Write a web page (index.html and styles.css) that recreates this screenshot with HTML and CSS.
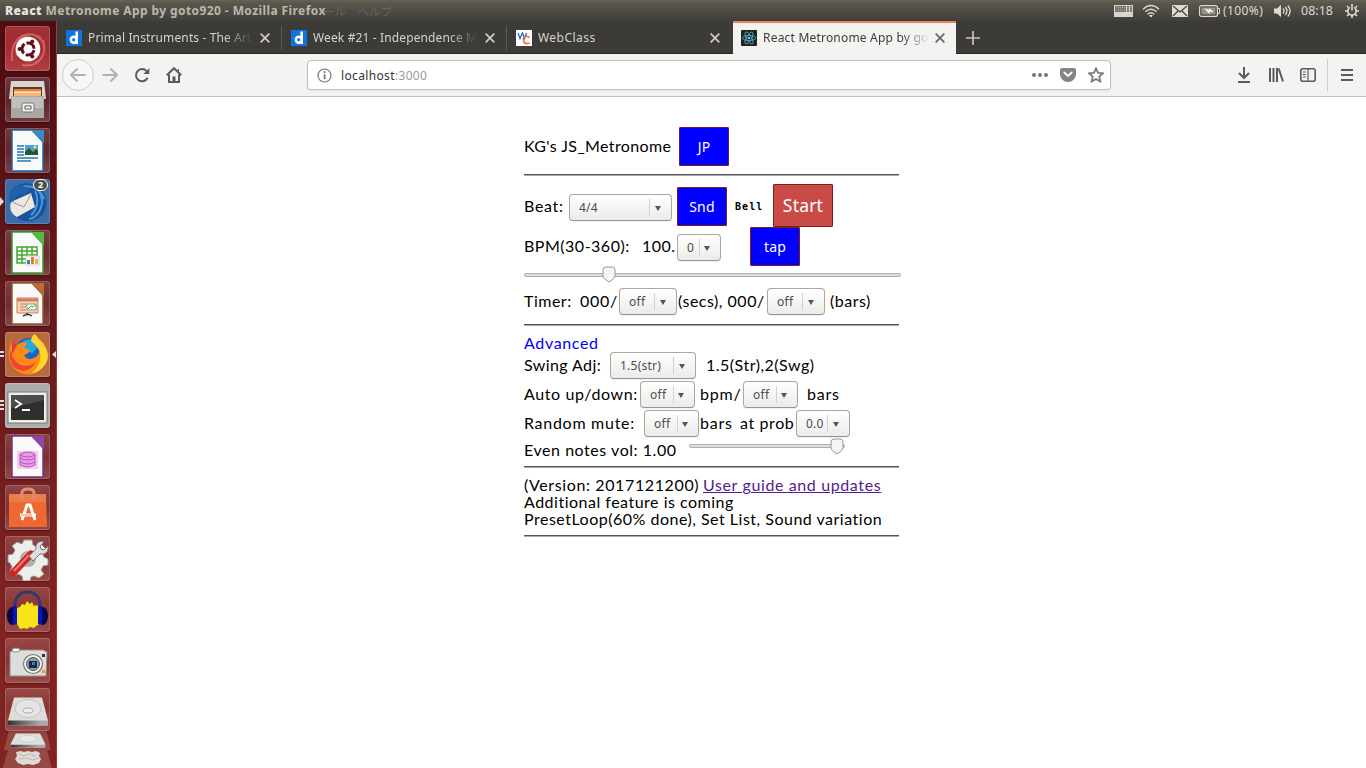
FILE: index.html
```html
<!DOCTYPE html>
<html lang="en">
<head>
<meta charset="utf-8">
<title>React Metronome App by goto920</title>
<link rel="stylesheet" href="styles.css">
</head>
<body>
<header class="panel">
  <div class="title"><strong>React</strong> Metronome App by goto920 - Mozilla Firefox</div>
  <div class="ghost">ール　ヘルプ</div>
  <div class="status">
    <svg class="kbd" width="19" height="12" viewBox="0 0 19 12"><path d="M0 0h19v12H0z" fill="#d8d5ce"/><path d="M1 1h11v6H1zM13 1h2v6h-2zM16 1h2v6h-2z" fill="#77766f"/><path d="M2 2.5h9M2 5h9M14 2v4M17 2v4" stroke="#aaa9a3" stroke-dasharray="1 1"/></svg>
    <svg class="wifi" width="18" height="14" viewBox="0 0 18 14" fill="none" stroke="#dfdbd2" stroke-width="1.4"><path d="M1 5.2Q9-2.2 17 5.2M3.3 7.8Q9 2.5 14.7 7.8M5.6 10.3Q9 7 12.4 10.3"/><path d="M7 11.5Q9 9.8 11 11.5L9 13.5z" fill="#dfdbd2" stroke="none"/></svg>
    <svg class="mail" width="16" height="12" viewBox="0 0 16 12"><path d="M0 0h16v12H0z" fill="#dfdbd2"/><path d="M1 1l7 6 7-6M1 11l5-5M15 11l-5-5" fill="none" stroke="#46443e" stroke-width="1.2"/></svg>
    <svg class="batt" width="21" height="12" viewBox="0 0 21 12"><rect x=".6" y=".6" width="17.8" height="10.8" rx="2" fill="none" stroke="#dfdbd2" stroke-width="1.2"/><path d="M2.5 2.5h14v7h-14z" fill="#96938b"/><path d="M18.500 3.500h2v5h-2" fill="none" stroke="#dfdbd2"/><path d="M5 3l5 2V3l5 4.500-4.500-1V9z" fill="#fff"/></svg>
    <span class="pct">(100%)</span>
    <svg class="vol" width="18" height="14" viewBox="0 0 18 14"><path d="M0 4.5h3L7 1v12L3 9.5H0z" fill="#dfdbd2"/><path d="M9 4.5q2 2.5 0 5M11.3 3q3.3 4 0 8M13.8 1.5q4.6 5.5 0 11" fill="none" stroke="#dfdbd2" stroke-width="1.3"/></svg>
    <span class="clock">08:18</span>
    <svg class="gear" width="14" height="14" viewBox="0 0 14 14" fill="none" stroke="#dfdbd2"><path d="M4.800 3.400a4.200 4.200 0 1 0 4.400 0" stroke-width="1.700"/><path d="M7 0v6.500" stroke-width="1.600"/><path d="M3.500 3.500L2 2M10.500 3.500L12 2M2.500 7H0M11.500 7H14M3.700 10.300L2 12M10.300 10.300L12 12M7 11.500V14" stroke-width="1.700"/></svg>
  </div>
</header>
<div class="desktop">
<nav class="launcher">
  <div class="tile red"><svg viewBox="0 0 45 45"><path d="M7 35C5 18 15 5 29 9 43 14 42 31 30 37M17 39C34 42 43 28 38 14M12 30C8 14 22 3 36 12" fill="none" stroke="#e58e8e" stroke-width="2" opacity=".55"/><circle cx="23" cy="23" r="12.3" fill="#fff"/><circle cx="23" cy="23" r="6" fill="none" stroke="#601016" stroke-width="3" stroke-dasharray="10.5 2" stroke-dashoffset="-1"/><g fill="#601016"><circle cx="14.5" cy="23" r="2"/><circle cx="27.2" cy="15.6" r="2"/><circle cx="27.2" cy="30.4" r="2"/></g></svg></div>
  <div class="tile"><svg viewBox="0 0 45 45"><path d="M6 4h33l2 18H4z" fill="#d7d5d2"/><path d="M8 10h29v10H8z" fill="#5d3920"/><path d="M9 12h27v3H9z" fill="#ec8434"/><path d="M9 15h27v4H9z" fill="#f6b477"/><path d="M9 15h27" stroke="#fff"/><path d="M6 19h33v22H6z" fill="#aaa7a4"/><path d="M7 20h31v11H7z" fill="#c1bfbc"/><rect x="17" y="26" width="12" height="9" rx="1.5" fill="#eee" stroke="#777"/><path d="M20 29h6v3h-6z" fill="#fff" stroke="#555"/></svg></div>
  <div class="tile"><svg viewBox="0 0 45 45"><path d="M7 2h20l11 12v29H7z" fill="#fafafa" stroke="#1e699c" stroke-width="1.5"/><path d="M26 2h13v13z" fill="#368bc4"/><path d="M12 18h7M12 21h7M12 24h7M12 27h7M12 30h21M12 33h14" stroke="#2677ad" stroke-width="1.5"/><path d="M20 17h13v10H20z" fill="#4aa3df"/><path d="M20 27v-3l4-4 4 4 3-3 2 2v4z" fill="#27562d"/><circle cx="30" cy="19" r="1.5" fill="#ffe45c"/></svg></div>
  <div class="tile bluetile"><i class="pip one"></i><svg viewBox="0 0 45 45"><path d="M5 16C8 2 27 1 36 10c11 11 5 31-11 32C10 43 3 29 5 16z" fill="#18539c"/><path d="M9 15C18 1 36 8 39 20M34 12c8 14-2 27-10 28M30 12c5 10 1 20-4 24" fill="none" stroke="#4998da" stroke-width="2"/><path d="M6 23l20-9 4 14-18 10C6 35 4 29 6 23z" fill="#ece8df"/><path d="M7 23l12 5 7-13" fill="none" stroke="#9b9890"/><path d="M4 20C4 9 10 7 15 6l10 4-5 5C13 15 10 18 8 23z" fill="#1d63ac"/></svg><b class="badge">2</b></div>
  <div class="tile"><svg viewBox="0 0 45 45"><path d="M7 2h20l11 12v29H7z" fill="#fafafa" stroke="#31a02e" stroke-width="1.5"/><path d="M26 2h13v13z" fill="#52bd39"/><path d="M12 17h20v16H12zM12 21h20M12 25h20M12 29h20M17 17v16M22 17v16M27 17v16" fill="none" stroke="#45a72e" stroke-width="1.5"/><path d="M21 26h13v9H21z" fill="#fff" stroke="#ccc"/><path d="M22 30h3v4h-3z" fill="#3387bd"/><path d="M26 27h3v7h-3z" fill="#e77837"/><path d="M30 29h3v5h-3z" fill="#d8bc5a"/></svg></div>
  <div class="tile"><svg viewBox="0 0 45 45"><path d="M7 2h20l11 12v29H7z" fill="#fafafa" stroke="#91582a" stroke-width="1.5"/><path d="M26 2h13v13z" fill="#bd6c31"/><path d="M12 17h21v15H12z" fill="#f8d3be" stroke="#d17d57"/><path d="M12 19h21" stroke="#d17d57" stroke-width="3"/><path d="M15 23h6M15 26h6M15 29h6" stroke="#d17d57"/><path d="M22 23h9v6h-9z" fill="#fff" stroke="#6ba769"/><path d="M23 28l3-3 2 1 3-3" fill="none" stroke="#4a9d48"/><path d="M22 32v2M18 35q5-3 9 0" fill="none" stroke="#333" stroke-width="1.5"/></svg></div>
  <div class="tile orange"><i class="pip two"></i><svg viewBox="0 0 45 45"><circle cx="24" cy="21" r="15" fill="#1667c7"/><path d="M18 9q10-5 17 4l-8 8-10-5z" fill="#22a8df"/><path d="M7 8l5 5q4-4 10-2l-3 5q5 1 6 3-2 3-6 4 3 6 10 3 8-4 4-13-3-4-7-4 1-6 4-7 3 5 8 9 9 13 1 23C30 47 12 44 6 32 1 22 6 13 7 8z" fill="#ff8b16"/><path d="M30 2q3 5 8 9 9 13 1 23-5 6-12 7 10-9 8-21-2-5-9-11 1-6 4-7z" fill="#ffd52e"/><path d="M6 18c1 13 13 21 25 12C23 44 9 39 6 30 4 25 4 21 6 18z" fill="#f24236"/><path d="M7 8l5 5-5 10z" fill="#e5394a"/></svg><i class="active"></i></div>
  <div class="tile gray"><i class="pip three"></i><svg viewBox="0 0 45 45"><path d="M3 9h39v31H3z" fill="#ededeb" stroke="#777"/><path d="M6 12h33v25H6z" fill="#2d302d"/><path d="M6 12h33v5L6 25z" fill="#4a4d4a"/><path d="M10 17l6 4-6 4M17 27h8" fill="none" stroke="#fff" stroke-width="1.8"/></svg></div>
  <div class="tile"><svg viewBox="0 0 45 45"><path d="M7 2h20l11 12v29H7z" fill="#fafafa" stroke="#71358b" stroke-width="1.5"/><path d="M26 2h13v13z" fill="#8d48a7"/><path d="M12 17h21v18H12z" fill="#f0ccf1"/><path d="M15 20q8-4 15 0v11q-7 4-15 0z" fill="#e79be7" stroke="#b853bd"/><path d="M15 21q8 4 15 0M15 24q8 4 15 0M15 28q8 4 15 0" fill="none" stroke="#b853bd"/></svg></div>
  <div class="tile"><svg viewBox="0 0 45 45"><path d="M4 9h37l1 33H4z" fill="#ec6934"/><path d="M4 9h37v8H4z" fill="#ee7b4c"/><path d="M17 14V8q0-4 6-4t6 4v6" fill="none" stroke="#e9896b" stroke-width="3"/><path d="M17 35l5-15h3l5 15M15 30h16" fill="none" stroke="#fff" stroke-width="3"/><path d="M16 30h11" stroke="#ef8355"/></svg></div>
  <div class="tile"><svg viewBox="0 0 45 45"><path d="M19 4h8l1 5 4 2 4-3 5 5-3 5 1 3 4 2v6l-5 1-2 4 3 4-5 4-5-2-3 1-1 4h-7l-1-5-4-2-4 2-4-5 2-4-2-4-2-1v-7l5-1 2-4-3-4 5-4 5 2z" fill="#eeeeec" stroke="#999"/><circle cx="23" cy="23" r="8" fill="#b0aeac"/><path d="M8 37l18-19" stroke="#cf2525" stroke-width="7" stroke-linecap="round"/><path d="M9 35l15-16" stroke="#f17c72" stroke-width="2"/><path d="M24 20l7-7c-1-5 3-9 8-7l-4 4 1 3 3 1 4-4c1 6-3 9-8 8l-7 7z" fill="#ddd" stroke="#777"/></svg></div>
  <div class="tile"><svg viewBox="0 0 45 45"><path d="M10 20C8 0 37 0 35 20" fill="none" stroke="#303a6c" stroke-width="3"/><path d="M12 21l3-1 2-3 3 1 2-4 3 3 2-2 2 4 3-1 3 5v14l-4 2-2 2-4-1-3 2-3-1-4 1-3-5-1-5z" fill="#f7e51a"/><ellipse cx="7" cy="29" rx="5" ry="9" fill="#050547"/><ellipse cx="38" cy="29" rx="5" ry="9" fill="#050547"/><path d="M8 19q4-1 4 3v15q-4 2-4-2zM37 19q-4-1-4 3v15q4 2 4-2z" fill="#0715be"/></svg></div>
  <div class="tile"><svg viewBox="0 0 45 45"><path d="M5 14l4-2h29l4 2-1 24H5z" fill="#dddddb" stroke="#92908f"/><ellipse cx="11" cy="12" rx="4" ry="2" fill="#fafafa" stroke="#888"/><circle cx="28" cy="26" r="9.500" fill="#f4f4f4" stroke="#777" stroke-width="1.2"/><circle cx="28" cy="26" r="6.500" fill="#999" stroke="#555"/><rect x="24" y="23" width="8" height="7" fill="#102a4c"/><path d="M27 24h3v3h-3z" fill="#3682be"/><path d="M37 16h3v3h-3z" fill="#333"/><path d="M37 32h3v3h-3z" fill="#f19832"/></svg></div>
  <div class="tile disk"><svg viewBox="0 0 45 42"><defs><linearGradient id="edge"><stop stop-color="#333"/><stop offset=".8" stop-color="#aaa"/></linearGradient></defs><path d="M9 9h28l6 23v5H3v-5z" fill="#dddcdb"/><path d="M3 32h40v5H3z" fill="url(#edge)"/><ellipse cx="23" cy="20" rx="13" ry="9" fill="#e5e5e3" stroke="#c5c5c3"/><ellipse cx="23" cy="22" rx="5" ry="2.500" fill="#eee" stroke="#aaa"/></svg></div>
  <div class="fold upper"><svg viewBox="0 0 45 22"><path d="M9 3h28l6 12v4H3v-4z" fill="#e1dfdd"/><path d="M3 16h40v3H3z" fill="url(#edge)"/><ellipse cx="23" cy="9" rx="11" ry="4" fill="#e8e8e6" stroke="#ccc"/></svg></div>
  <div class="fold lower"><svg viewBox="0 0 45 17"><path d="M11 2l5-1 3 1 4-1 4 1 4-1 4 2-1 3 2 3-2 4-6 2-5-1-5 1-5-2-3-4 2-3z" fill="#dedbd7"/><path d="M13 4l6 2 5-2 7 2M14 9l8-1 6 2 6-2" fill="none" stroke="#bbb8b4"/></svg></div>
</nav>
<div class="browser">
  <div class="tabs">
    <div class="tab"><svg class="fav" viewBox="0 0 16 16"><path d="M0 0h16v16H0z" fill="#1074e0"/><path d="M10.7 1.5V14M10.5 9.7a2.8 3 0 1 1-5.6 0 2.8 3 0 0 1 5.6 0z" fill="none" stroke="#fff" stroke-width="2.5"/></svg><span class="name fade t1">Primal Instruments - The Art</span><svg class="x" viewBox="0 0 10 10"><path d="M0.7.7l8.6 8.6M9.3.7L.7 9.3"/></svg></div>
    <div class="tab"><svg class="fav" viewBox="0 0 16 16"><path d="M0 0h16v16H0z" fill="#1074e0"/><path d="M10.7 1.5V14M10.5 9.7a2.8 3 0 1 1-5.6 0 2.8 3 0 0 1 5.6 0z" fill="none" stroke="#fff" stroke-width="2.5"/></svg><span class="name fade t2">Week #21 - Independence M</span><svg class="x" viewBox="0 0 10 10"><path d="M0.7.7l8.6 8.6M9.3.7L.7 9.3"/></svg></div>
    <div class="tab last"><svg class="fav" viewBox="0 0 16 16"><path d="M0 0h16v16H0z" fill="#fff"/><path d="M2 3l2 5.500 2.500-5.500 2 5.500 2-5.500" fill="none" stroke="#2861dc" stroke-width="1.3"/><path d="M13.5 7.5q-5-3-6 1.5-.5 6 6 4" fill="none" stroke="#ef6c2b" stroke-width="1.6"/></svg><span class="name t3">WebClass</span><svg class="x" viewBox="0 0 10 10"><path d="M0.7.7l8.6 8.6M9.3.7L.7 9.3"/></svg></div>
    <div class="tab current"><svg class="fav" viewBox="0 0 16 16"><rect width="16" height="16" rx="1" fill="#222"/><g fill="none" stroke="#52b5cc" stroke-width=".8"><ellipse cx="8" cy="8" rx="6.7" ry="2.6"/><ellipse cx="8" cy="8" rx="6.7" ry="2.6" transform="rotate(60 8 8)"/><ellipse cx="8" cy="8" rx="6.7" ry="2.6" transform="rotate(120 8 8)"/></g><circle cx="8" cy="8" r="1.3" fill="#61dafb"/></svg><span class="name fade t4">React Metronome App by go</span><svg class="x" viewBox="0 0 10 10"><path d="M0.7.7l8.6 8.6M9.3.7L.7 9.3"/></svg></div>
    <svg class="plus" width="14" height="14" viewBox="0 0 14 14"><path d="M7 0v14M0 7h14"/></svg>
  </div>
  <div class="toolbar">
    <div class="back"><svg width="16" height="16" viewBox="0 0 16 16"><path d="M15.5 8H1M7.5 1.5L1 8l6.500 6.500"/></svg></div>
    <svg class="fwd" width="16" height="16" viewBox="0 0 16 16"><path d="M.5 8H15M8.500 1.500L15 8l-6.500 6.500"/></svg>
    <svg class="reload" width="16" height="16" viewBox="0 0 16 16"><path d="M13.600 10.800A6.100 6.100 0 1 1 12.500 4"/><path d="M15.400 1v6H9.400z" class="solid"/></svg>
    <svg class="home" width="16" height="16" viewBox="0 0 16 16"><path d="M.8 8.300L8 1.200l7.200 7.100M3 7.500V15h10V7.500"/><path d="M6.500 9.500h3V15h-3zM11.500 2H13v4z" class="solid"/></svg>
    <div class="url">
      <svg width="15" height="15" viewBox="0 0 15 15"><circle cx="7.500" cy="7.500" r="6.500" fill="none" stroke="#777" stroke-width="1.200"/><path d="M6.700 3.200h1.800V5H6.700zM6.700 6.300h1.800v5H6.700z" fill="#777"/></svg>
      <span class="address">localhost<em>:3000</em></span>
      <svg class="dots" width="16" height="4" viewBox="0 0 16 4" fill="#777"><circle cx="2" cy="2" r="2"/><circle cx="8" cy="2" r="2"/><circle cx="14" cy="2" r="2"/></svg>
      <svg class="pocket" width="16" height="14" viewBox="0 0 16 14"><path d="M2 0h12q2 0 2 2v4a8 8 0 0 1-16 0V2q0-2 2-2z" fill="#858585"/><path d="M4.300 4.500L8 8l3.700-3.500" fill="none" stroke="#fff" stroke-width="1.800" stroke-linecap="round"/></svg>
      <svg width="16" height="16" viewBox="0 0 16 16"><path d="M8 1.300l2 4.500 4.900.5-3.600 3.300 1 4.900L8 12l-4.300 2.500 1-4.900L1.100 6.300l4.900-.5z" fill="none" stroke="#777" stroke-width="1.700"/></svg>
    </div>
    <svg class="down" width="14" height="16" viewBox="0 0 14 16"><path d="M7 0v11M2 6l5 5 5-5M1 15h12"/></svg>
    <svg class="library" width="16" height="14" viewBox="0 0 16 14"><path d="M2 0v14M5.500 0v14M9 0v14M10.700.5L15 13.500"/></svg>
    <svg class="side" width="16" height="14" viewBox="0 0 16 14"><rect x=".8" y=".8" width="14.400" height="12.400" rx="2"/><path d="M8 1v12M2.800 4h3M2.800 6.500h3M2.800 9h3" stroke-width="1.200"/></svg>
    <div class="menu"><svg width="12" height="12" viewBox="0 0 12 12"><path d="M0 1h12M0 6h12M0 11h12"/></svg></div>
  </div>
  <main>
    <div class="row head"><span class="w1">KG's JS_Metronome</span><button class="btn jp">JP</button></div>
    <hr>
    <div class="row beat"><span class="w2">Beat:</span><div class="select wide"><span>4/4</span></div><button class="btn snd">Snd</button><span class="bell">Bell</span><button class="btn start">Start</button></div>
    <div class="row bpm"><span class="w3">BPM(30-360):</span><span class="w4">100.</span><div class="select zero"><span>0</span></div><button class="btn tap">tap</button></div>
    <div class="slider tempo"><svg class="thumb" width="14" height="17" viewBox="0 0 14 17"><path d="M4 1h6q3 0 3 3v6q0 2-3 4l-3 2-3-2q-3-2-3-4V4q0-3 3-3z" fill="#f5f5f4" stroke="#999"/></svg></div>
    <div class="row timer"><span class="w5">Timer:</span><span class="w6">000/</span><div class="select t"><span>off</span></div><span class="w7">(secs), 000/</span><div class="select t"><span>off</span></div><span class="w8">(bars)</span></div>
    <hr class="mid">
    <div class="row advanced"><span class="w9">Advanced</span></div>
    <div class="row swing"><span class="w10">Swing Adj:</span><div class="select sw"><span>1.5(str)</span></div><span class="w11">1.5(Str),2(Swg)</span></div>
    <div class="row auto"><span class="w12">Auto up/down:</span><div class="select s"><span>off</span></div><span class="w13">bpm/</span><div class="select s"><span>off</span></div><span class="w14">bars</span></div>
    <div class="row random"><span class="w15">Random mute:</span><div class="select s"><span>off</span></div><span class="w16">bars</span><span class="w17">at prob</span><div class="select p"><span>0.0</span></div></div>
    <div class="row even"><span class="w18">Even notes vol: 1.00</span><div class="slider vol2"><svg class="thumb" width="14" height="17" viewBox="0 0 14 17"><path d="M4 1h6q3 0 3 3v6q0 2-3 4l-3 2-3-2q-3-2-3-4V4q0-3 3-3z" fill="#f5f5f4" stroke="#999"/></svg></div></div>
    <hr class="low">
    <div class="notes"><div><span class="w19">(Version: 2017121200)</span><a class="w20">User guide and updates</a></div><div class="n2">Additional feature is coming</div><div class="n3">PresetLoop(60% done), Set List, Sound variation</div></div>
    <hr class="end">
  </main>
</div>
</div>
</body>
</html>
```
FILE: styles.css
```css
* { box-sizing: border-box; }
body { margin: 0; width: 1366px; height: 768px; overflow: hidden; background: #fff; font-family: "Noto Sans", "Noto Sans CJK JP", sans-serif; }
svg { display: block; flex: none; }
.panel { height: 21px; display: flex; align-items: center; background: linear-gradient(#66634f 0, #5a574d 3px, #3f3e39); color: #dfdbd2; font-size: 12px; white-space: nowrap; }
.title { width: 318px; margin-left: 5px; font-weight: bold; line-height: 20px; letter-spacing: .41px; color: #bbb7ac; }
.title strong { color: #e8e4dc; }
.ghost { color: #66645b; font-family: "Noto Sans CJK JP", sans-serif; font-size: 11.500px; line-height: 20px; }
.status { margin-left: auto; display: flex; align-items: center; padding-right: 7px; }
.wifi { margin-left: 9px; }
.mail { margin-left: 12px; }
.batt { margin-left: 11px; }
.pct { margin-left: 3px; width: 41px; letter-spacing: .4px; }
.vol { margin-left: 10px; }
.clock { margin-left: 9px; width: 34px; font-size: 12.500px; }
.gear { margin-left: 10px; }
.desktop { display: flex; height: 747px; }
.launcher { width: 57px; flex: none; padding: 5px 0 0 5px; background: linear-gradient(#4d0d12, #651a1d 40%, #812320 80%, #812320); border-right: 1px solid #a33b35; overflow: hidden; }
.tile { position: relative; width: 45px; height: 45px; margin-bottom: 6px; border-radius: 3px; background: linear-gradient(#ffffff2b, #ffffff14 50%, #ffffff30); box-shadow: inset 0 0 0 1px #ffffff2e, 0 1px 2px #0005; }
.tile svg { width: 100%; height: 100%; }
.red { background: linear-gradient(#a03035, #a52a30 50%, #b04044); }
.bluetile { background: #3c6ba7; }
.orange { background: #b86a3e; }
.gray { background: #aeacaa; }
.disk { height: 43px; margin: -1px 0 0; }
.fold { width: 47px; margin-left: -1px; height: 19px; background: #ffffff2b; clip-path: polygon(10% 0, 90% 0, 100% 100%, 0 100%); }
.fold svg { width: 47px; height: 19px; }
.fold.lower { width: 49px; margin-left: -2px; height: 18px; }
.fold.lower svg { width: 49px; height: 17px; }
.badge { position: absolute; right: 2px; top: 0; width: 15px; height: 12px; border: 1px solid #fff; border-radius: 6px; background: #4d4d4d; color: #fff; font-size: 9px; line-height: 10px; text-align: center; }
.pip { position: absolute; left: -5px; width: 4px; background: #e4dcda; }
.one { top: 18px; height: 9px; clip-path: polygon(0 0, 100% 50%, 0 100%); }
.two { top: 19px; height: 6px; background: linear-gradient(#e4dcda 2px, transparent 2px 4px, #e4dcda 4px); }
.three { top: 17px; height: 11px; background: linear-gradient(#e4dcda 2px, transparent 2px 4px, #e4dcda 4px 6px, transparent 6px 8px, #e4dcda 8px 10px, transparent 10px); }
.active { position: absolute; right: -6px; top: 19px; width: 4px; height: 7px; background: #e4dcda; clip-path: polygon(100% 0, 0 50%, 100% 100%); }
.browser { flex: 1; min-width: 0; }
.tabs { height: 33px; display: flex; align-items: center; background: #3c3b37; box-shadow: inset 0 -1px #252522; color: #d6d3cb; font-size: 12px; }
.tab { position: relative; width: 225px; height: 33px; flex: none; display: flex; align-items: center; padding-left: 9px; }
.tab:not(.last):not(.current)::after { content: ""; position: absolute; right: 0; top: 5px; bottom: 4px; width: 1px; background: #5a5955; }
.tab.last { width: 226px; }
.tab.current { width: 223px; padding-left: 8px; background: #f4f3f1; border-top: 2px solid #f08355; color: #3c3b37; }
.tab.current .fav, .tab.current .name, .tab.current .x { margin-top: -2px; }
.fav { width: 16px; height: 16px; }
.name { width: 164px; margin-left: 6px; white-space: nowrap; overflow: hidden; line-height: 20px; }
.t1 { letter-spacing: .13px; }
.t2 { letter-spacing: .13px; }
.t3 { letter-spacing: .45px; }
.t4 { letter-spacing: .2px; }
.tab.current .name { width: 167px; }
.fade { mask-image: linear-gradient(90deg, #000 83%, transparent); }
.x { width: 10px; height: 10px; margin-left: 8px; fill: none; stroke: #cfccc4; stroke-width: 1.700; }
.last .x { margin-left: 8px; }
.current .x { margin-left: 5px; stroke: #666; }
.plus { margin-left: 10px; stroke: #c9c6be; stroke-width: 1.700; }
.toolbar { height: 43px; display: flex; align-items: center; background: #f4f3f1; border-bottom: 1px solid #c5c2be; }
.toolbar > svg, .back svg, .menu svg { fill: none; stroke: #5b5b59; stroke-width: 2; }
.back { width: 32px; height: 32px; margin-left: 5px; border: 1px solid #d0cecc; border-radius: 50%; display: flex; align-items: center; justify-content: center; background: #f8f7f6; }
.back svg, .toolbar .fwd { stroke: #b2b1af; }
.fwd { margin-left: 8px; }
.reload { margin-left: 16px; }
.home { margin-left: 16px; }
.toolbar .solid { fill: #5b5b59; stroke: none; }
.url { width: 804px; height: 30px; margin-left: 125px; border: 1px solid #c2bfbb; border-radius: 4px; background: #fff; display: flex; align-items: center; padding: 0 6px 0 9px; box-shadow: 0 1px 3px #0001; }
.address { margin-left: 9px; font-size: 12px; letter-spacing: .35px; color: #333; }
.address em { color: #999; font-style: normal; }
.dots { margin-left: auto; }
.pocket { margin: 0 12px; }
.down { margin-left: 126px; }
.library { margin-left: 17px; }
.side { margin-left: 16px; }
.toolbar .side { stroke-width: 1.600; }
.menu { margin-left: 11px; border-left: 1px solid #d0ceca; height: 32px; padding-left: 13px; display: flex; align-items: center; }
main { width: 377px; margin-left: 467px; padding-top: 30px; font-family: Lato, sans-serif; font-size: 16px; line-height: 17px; letter-spacing: .5px; color: #000; }
.row { display: flex; align-items: center; }
.row > span { white-space: nowrap; flex: none; padding-bottom: 2px; }
hr { width: 375px; height: 2px; margin: 8px 0; border: 0; background: linear-gradient(#555 1px, #aaa 1px); }
.head { height: 39px; }
.btn { width: 50px; height: 39px; padding: 0; border: 1px solid #7e1c1c; border-radius: 1px; background: #00f; color: #fff; font: 14px/20px "Noto Sans", sans-serif; letter-spacing: .2px; flex: none; }
.btn.start { width: 60px; height: 43px; padding-bottom: 2px; background: #c84b46; font-size: 17.500px; margin-left: 10px; }
.beat { height: 43px; }
.bpm { height: 39px; }
.select { height: 27px; flex: none; border: 1px solid #aaa7a3; border-bottom-color: #979490; border-radius: 4px; background: linear-gradient(#fff, #ebebe9); box-shadow: 0 1px 1px #0001; color: #4c4c4c; display: flex; align-items: center; padding-left: 9px; font: 12px/18px "Noto Sans", sans-serif; letter-spacing: .25px; }
.select::before { content: ""; order: 2; margin-left: auto; width: 1px; height: 17px; background: #d4d2d0; }
.select::after { content: ""; order: 3; margin: 1px 10px 0 5px; border: 3.500px solid transparent; border-top: 5px solid #555; border-bottom: 0; }
.wide { width: 103px; margin-top: 4px; }
.zero { width: 44px; margin-top: 2px; }
.snd { margin-left: 5px; margin-top: 2px; }
.tap { margin-left: 29px; }
.row > .bell { width: 28px; margin: 4px 0 0 8px; font: bold 10px/14px "DejaVu Sans Mono", monospace; letter-spacing: 1.100px; }
.w1 { width: 155px; letter-spacing: .38px; }
.w2 { width: 45px; margin-top: 2px; letter-spacing: .7px; }
.w3 { width: 118px; }
.w4 { width: 35px; }
.slider { position: relative; height: 4px; border: 1px solid #b1afab; border-radius: 2px; background: #dededc; }
.thumb { position: absolute; top: -8px; }
.tempo { margin: 7px 0 11px; width: 377px; }
.tempo .thumb { left: 77px; }
.timer, .swing, .auto, .random { height: 27px; }
.w5 { width: 56px; }
.w6 { width: 39px; letter-spacing: .7px; }
.t { width: 58px; }
.w7 { width: 89px; margin-left: 1px; }
.w8 { margin-left: 5px; }
.mid { margin: 9px 0 8px; }
.advanced { height: 18px; color: #00f; letter-spacing: .65px; }
.w10 { width: 86px; letter-spacing: .4px; }
.sw { width: 86px; }
.w11 { margin-left: 10px; }
.auto, .random { margin-top: 2px; }
.w12 { width: 116px; letter-spacing: .6px; }
.s { width: 55px; }
.s::after, .zero::after { margin-right: 10px; margin-left: 4px; }
.w13 { width: 43px; margin-left: 5px; letter-spacing: .8px; }
.w14 { margin-left: 9px; letter-spacing: .8px; }
.w15 { width: 120px; letter-spacing: .72px; }
.w16 { width: 40px; margin-left: 1px; letter-spacing: .8px; }
.w17 { width: 56px; letter-spacing: .6px; }
.p { width: 54px; }
.even { height: 26px; }
.w18 { width: 165px; letter-spacing: .55px; }
.vol2 { width: 156px; margin-top: -8px; }
.vol2 .thumb { left: 140px; top: -7px; }
.low { margin: 3px 0 8px; }
.notes { white-space: nowrap; }
.notes > div { height: 17px; }
.w19 { display: inline-block; width: 179px; letter-spacing: .62px; }
.w20 { color: #551a8b; text-decoration: underline; letter-spacing: .62px; }
.end { margin-top: 8px; }
```
